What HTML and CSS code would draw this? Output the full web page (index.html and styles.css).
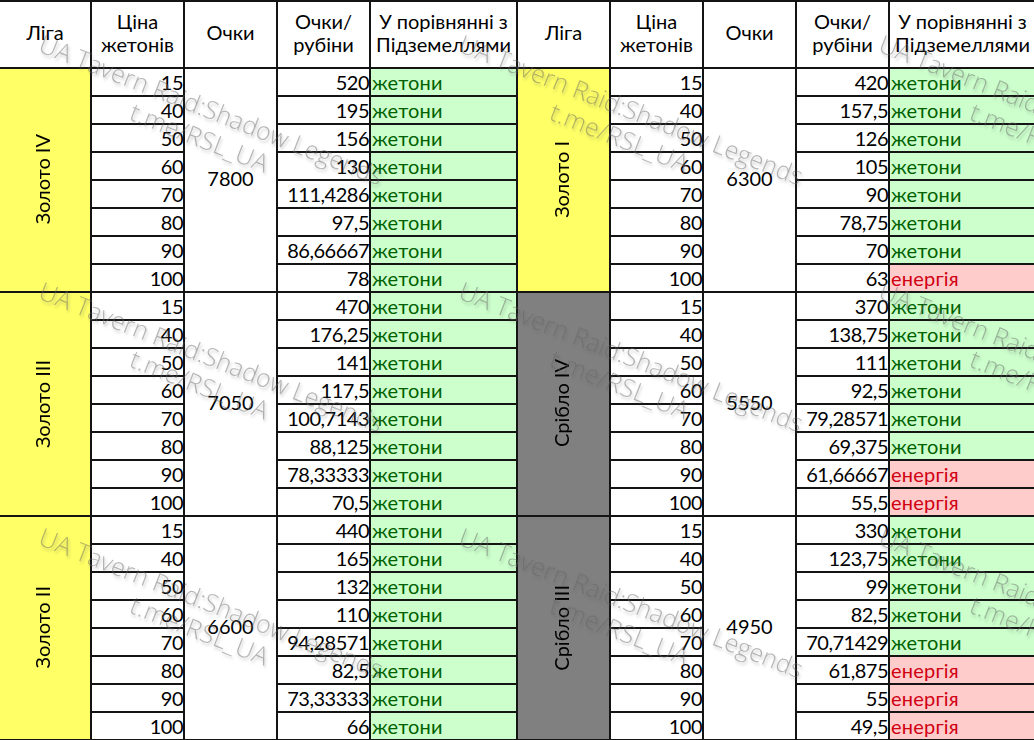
FILE: index.html
```html
<!DOCTYPE html>
<html lang="uk">
<head>
<meta charset="utf-8">
<title>Ліги</title>
<link rel="stylesheet" href="styles.css">
</head>
<body>
<div class="sheet">
<table class="grid">
<colgroup><col class="c1"><col class="c2"><col class="c3"><col class="c4"><col class="c5"><col class="c6"><col class="c7"><col class="c8"><col class="c9"><col class="c10"></colgroup>
<thead>
<tr><th>Ліга</th><th>Ціна<br>жетонів</th><th>Очки</th><th>Очки/<br>рубіни</th><th>У порівнянні з<br>Підземеллями</th><th>Ліга</th><th>Ціна<br>жетонів</th><th>Очки</th><th>Очки/<br>рубіни</th><th>У порівнянні з<br>Підземеллями</th></tr>
</thead>
<tbody>
<tr><td rowspan="8" class="league gold"><span>Золото IV</span></td><td class="n">15</td><td rowspan="8" class="pts">7800</td><td class="n">520</td><td class="t">жетони</td><td rowspan="8" class="league gold"><span>Золото I</span></td><td class="n">15</td><td rowspan="8" class="pts">6300</td><td class="n">420</td><td class="t">жетони</td></tr>
<tr><td class="n">40</td><td class="n">195</td><td class="t">жетони</td><td class="n">40</td><td class="n">157,5</td><td class="t">жетони</td></tr>
<tr><td class="n">50</td><td class="n">156</td><td class="t">жетони</td><td class="n">50</td><td class="n">126</td><td class="t">жетони</td></tr>
<tr><td class="n">60</td><td class="n">130</td><td class="t">жетони</td><td class="n">60</td><td class="n">105</td><td class="t">жетони</td></tr>
<tr><td class="n">70</td><td class="n">111,4286</td><td class="t">жетони</td><td class="n">70</td><td class="n">90</td><td class="t">жетони</td></tr>
<tr><td class="n">80</td><td class="n">97,5</td><td class="t">жетони</td><td class="n">80</td><td class="n">78,75</td><td class="t">жетони</td></tr>
<tr><td class="n">90</td><td class="n">86,66667</td><td class="t">жетони</td><td class="n">90</td><td class="n">70</td><td class="t">жетони</td></tr>
<tr><td class="n">100</td><td class="n">78</td><td class="t">жетони</td><td class="n">100</td><td class="n">63</td><td class="e">енергія</td></tr>
<tr><td rowspan="8" class="league gold"><span>Золото III</span></td><td class="n">15</td><td rowspan="8" class="pts">7050</td><td class="n">470</td><td class="t">жетони</td><td rowspan="8" class="league silver"><span>Срібло IV</span></td><td class="n">15</td><td rowspan="8" class="pts">5550</td><td class="n">370</td><td class="t">жетони</td></tr>
<tr><td class="n">40</td><td class="n">176,25</td><td class="t">жетони</td><td class="n">40</td><td class="n">138,75</td><td class="t">жетони</td></tr>
<tr><td class="n">50</td><td class="n">141</td><td class="t">жетони</td><td class="n">50</td><td class="n">111</td><td class="t">жетони</td></tr>
<tr><td class="n">60</td><td class="n">117,5</td><td class="t">жетони</td><td class="n">60</td><td class="n">92,5</td><td class="t">жетони</td></tr>
<tr><td class="n">70</td><td class="n">100,7143</td><td class="t">жетони</td><td class="n">70</td><td class="n">79,28571</td><td class="t">жетони</td></tr>
<tr><td class="n">80</td><td class="n">88,125</td><td class="t">жетони</td><td class="n">80</td><td class="n">69,375</td><td class="t">жетони</td></tr>
<tr><td class="n">90</td><td class="n">78,33333</td><td class="t">жетони</td><td class="n">90</td><td class="n">61,66667</td><td class="e">енергія</td></tr>
<tr><td class="n">100</td><td class="n">70,5</td><td class="t">жетони</td><td class="n">100</td><td class="n">55,5</td><td class="e">енергія</td></tr>
<tr><td rowspan="8" class="league gold"><span>Золото II</span></td><td class="n">15</td><td rowspan="8" class="pts">6600</td><td class="n">440</td><td class="t">жетони</td><td rowspan="8" class="league silver"><span>Срібло III</span></td><td class="n">15</td><td rowspan="8" class="pts">4950</td><td class="n">330</td><td class="t">жетони</td></tr>
<tr><td class="n">40</td><td class="n">165</td><td class="t">жетони</td><td class="n">40</td><td class="n">123,75</td><td class="t">жетони</td></tr>
<tr><td class="n">50</td><td class="n">132</td><td class="t">жетони</td><td class="n">50</td><td class="n">99</td><td class="t">жетони</td></tr>
<tr><td class="n">60</td><td class="n">110</td><td class="t">жетони</td><td class="n">60</td><td class="n">82,5</td><td class="t">жетони</td></tr>
<tr><td class="n">70</td><td class="n">94,28571</td><td class="t">жетони</td><td class="n">70</td><td class="n">70,71429</td><td class="t">жетони</td></tr>
<tr><td class="n">80</td><td class="n">82,5</td><td class="t">жетони</td><td class="n">80</td><td class="n">61,875</td><td class="e">енергія</td></tr>
<tr><td class="n">90</td><td class="n">73,33333</td><td class="t">жетони</td><td class="n">90</td><td class="n">55</td><td class="e">енергія</td></tr>
<tr><td class="n">100</td><td class="n">66</td><td class="t">жетони</td><td class="n">100</td><td class="n">49,5</td><td class="e">енергія</td></tr>
</tbody>
</table>
<div class="mark m1"><span>UA Tavern Raid:Shadow Legends</span><span>t.me/RSL_UA</span></div>
<div class="mark m2"><span>UA Tavern Raid:Shadow Legends</span><span>t.me/RSL_UA</span></div>
<div class="mark m3"><span>UA Tavern Raid:Shadow Legends</span><span>t.me/RSL_UA</span></div>
<div class="mark m4"><span>UA Tavern Raid:Shadow Legends</span><span>t.me/RSL_UA</span></div>
<div class="mark m5"><span>UA Tavern Raid:Shadow Legends</span><span>t.me/RSL_UA</span></div>
<div class="mark m6"><span>UA Tavern Raid:Shadow Legends</span><span>t.me/RSL_UA</span></div>
<div class="mark m7"><span>UA Tavern Raid:Shadow Legends</span><span>t.me/RSL_UA</span></div>
<div class="mark m8"><span>UA Tavern Raid:Shadow Legends</span><span>t.me/RSL_UA</span></div>
<div class="mark m9"><span>UA Tavern Raid:Shadow Legends</span><span>t.me/RSL_UA</span></div>
</div>
</body>
</html>
```
FILE: styles.css
```css
html, body { margin: 0; padding: 0; background: #fff; }
.sheet { position: relative; width: 1034px; height: 740px; overflow: hidden; }
.grid { border-collapse: collapse; table-layout: fixed; width: 1037px; margin-left: -2px; font-family: Lato, "Open Sans", sans-serif; font-size: 20px; color: #000; }
.c1 { width: 92px; } .c2, .c3, .c4, .c6, .c7, .c8, .c9 { width: 93px; } .c5, .c10 { width: 147px; }
.grid th, .grid td { border: 2px solid #141414; padding: 0; line-height: 22px; white-space: nowrap; }
.grid th { height: 61px; padding-bottom: 4px; line-height: 23px; font-weight: 400; text-align: center; background: #fff; }
.grid td { height: 26px; }
.n { text-align: right; background: #fff; letter-spacing: -.5px; }
.t, .e { text-align: left; padding-left: 1px !important; letter-spacing: .2px; }
.t { background: #ccffcc; color: #006100; }
.e { background: #ffcccc; color: #d00012; }
.grid .pts { text-align: center; background: #fff; padding-bottom: 4px; height: auto; }
.grid .league { text-align: center; padding-right: 6px; padding-top: 2px; }
.league span { writing-mode: vertical-rl; transform: rotate(180deg); display: inline-block; line-height: 22px; }
.gold { background: #ffff66; }
.silver { background: #808080; }
.mark { position: absolute; width: 420px; height: 180px; pointer-events: none; font-family: "Open Sans", sans-serif; font-weight: 300; font-size: 25px; color: rgba(100,100,100,.46); filter: blur(.5px); text-shadow: 2px 2px 3px rgba(90,90,90,.3); }
.mark span { position: absolute; left: 0; top: 0; white-space: nowrap; transform-origin: 0 0; transform: rotate(21.5deg); }
.mark span + span { left: 91px; top: 68px; letter-spacing: .3px; }
.m1 { left: 47px; top: 26px; }
.m2 { left: 467px; top: 26px; }
.m3 { left: 887px; top: 26px; }
.m4 { left: 47px; top: 273px; }
.m5 { left: 467px; top: 273px; }
.m6 { left: 887px; top: 273px; }
.m7 { left: 47px; top: 519px; }
.m8 { left: 467px; top: 519px; }
.m9 { left: 887px; top: 519px; }
```
